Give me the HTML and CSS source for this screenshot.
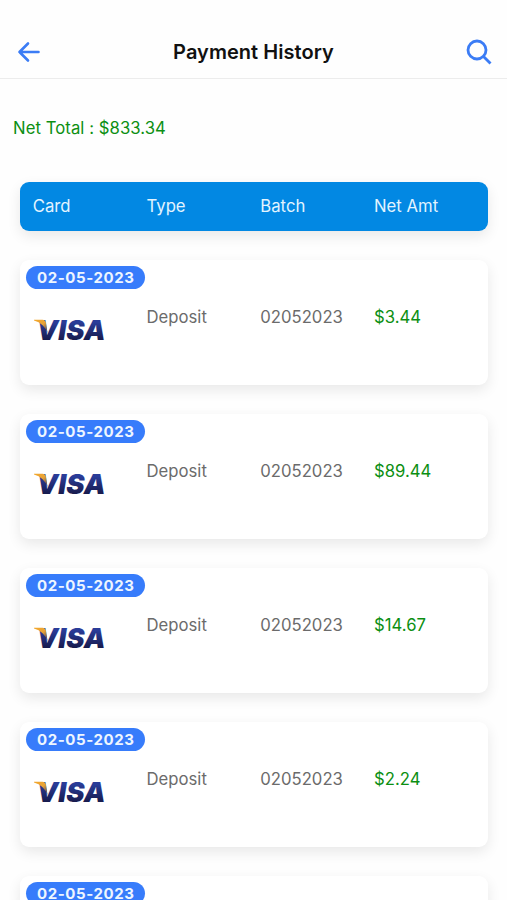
FILE: index.html
```
<!DOCTYPE html>
<html lang="en">
  <head>
    <meta charset="UTF-8" />
    <meta name="viewport" content="width=device-width, initial-scale=1.0" />
    <title>Payment History</title>
    <link rel="stylesheet" href="styles.css">
  </head>
  <body>
    <!-- shared logo, reused by every payment -->
    <svg class="defs" width="0" height="0" aria-hidden="true">
      <defs>
        <linearGradient id="visaBlue" x1="0" y1="0" x2="0" y2="1">
          <stop offset="0.25" stop-color="#2a3c98" />
          <stop offset="0.85" stop-color="#151642" />
        </linearGradient>
        <linearGradient id="visaGold" x1="0" y1="0" x2="1" y2="1">
          <stop offset="0" stop-color="#f3a72b" />
          <stop offset="0.5" stop-color="#e9a437" />
          <stop offset="1" stop-color="#2c2f68" />
        </linearGradient>
        <symbol id="visa" viewBox="0 0 74 24">
          <text class="visa-text" x="3.500" y="22.300" textLength="69" lengthAdjust="spacingAndGlyphs">VISA</text>
          <path d="M1 1.800H9.500Q12.500 2 13 5L14.500 15Q11 5.500 1 2.600Z" fill="url(#visaGold)" />
        </symbol>
      </defs>
    </svg>

    <header class="topbar">
      <button class="icon-btn" aria-label="Back">
        <svg width="24" height="24" viewBox="0 0 24 24">
          <path d="M11 3.500L2.500 12L11 20.500M2.500 12H21.500" />
        </svg>
      </button>
      <h1>Payment History</h1>
      <button class="icon-btn" aria-label="Search">
        <svg class="search" width="26" height="26" viewBox="0 0 26 26">
          <circle cx="11" cy="11" r="9" />
          <path d="M17.500 17.500L24.500 24.500" />
        </svg>
      </button>
    </header>

    <main>
      <p class="net-total">Net Total : $833.34</p>

      <div class="row table-head">
        <span>Card</span>
        <span>Type</span>
        <span>Batch</span>
        <span>Net Amt</span>
      </div>

      <section class="payment">
        <span class="date">02-05-2023</span>
        <div class="row">
          <svg class="visa" width="74" height="24"><use href="#visa" /></svg>
          <span>Deposit</span>
          <span>02052023</span>
          <span class="amount">$3.44</span>
        </div>
      </section>

      <section class="payment">
        <span class="date">02-05-2023</span>
        <div class="row">
          <svg class="visa" width="74" height="24"><use href="#visa" /></svg>
          <span>Deposit</span>
          <span>02052023</span>
          <span class="amount">$89.44</span>
        </div>
      </section>

      <section class="payment">
        <span class="date">02-05-2023</span>
        <div class="row">
          <svg class="visa" width="74" height="24"><use href="#visa" /></svg>
          <span>Deposit</span>
          <span>02052023</span>
          <span class="amount">$14.67</span>
        </div>
      </section>

      <section class="payment">
        <span class="date">02-05-2023</span>
        <div class="row">
          <svg class="visa" width="74" height="24"><use href="#visa" /></svg>
          <span>Deposit</span>
          <span>02052023</span>
          <span class="amount">$2.24</span>
        </div>
      </section>

      <section class="payment">
        <span class="date">02-05-2023</span>
      </section>
    </main>
  </body>
</html>
```
FILE: styles.css
```
* {
  box-sizing: border-box;
}
body {
  margin: 0;
  height: 900px;
  overflow: hidden;
  background: #fefefe;
  font-family: Inter, "Liberation Sans", sans-serif;
  font-size: 16.7px;
  color: #6b6b6b;
}
.defs {
  display: block;
}
.topbar {
  display: flex;
  align-items: center;
  justify-content: space-between;
  height: 79px;
  padding: 26px 15px 0 17px;
  border-bottom: 1px solid #ececec;
}
h1 {
  margin: 0;
  font-size: 20px;
  font-weight: 600;
  letter-spacing: 0.05px;
  color: #111;
}
.icon-btn {
  display: flex;
  padding: 0;
  border: none;
  background: none;
}
.icon-btn svg {
  fill: none;
  stroke: #3b7cf5;
  stroke-width: 2.6;
  stroke-linecap: round;
  stroke-linejoin: round;
}
.icon-btn .search {
  stroke-width: 2.8;
  stroke-linecap: butt;
}
.net-total {
  margin: 39px 0 42.6px 13px;
  line-height: 21px;
  letter-spacing: 0.06px;
  color: #0c8f12;
}
.row {
  display: grid;
  grid-template-columns: repeat(4, 113.75px);
  padding-left: 12.5px;
  line-height: 21px;
}
.table-head,
.payment {
  margin: 0 19.5px 29.8px 20.3px;
  border-radius: 9px;
  box-shadow: 0 5px 14px rgba(0, 0, 0, 0.09);
}
.table-head {
  height: 49px;
  padding-top: 14.5px;
  background: #0288e3;
  color: #e3f4ff;
}
.payment {
  height: 124.2px;
  padding-top: 5.6px;
  background: #fff;
}
.date {
  display: block;
  width: 119px;
  height: 23.4px;
  margin: 0 0 17.4px 6px;
  border-radius: 12px;
  background: #377cfb;
  color: #eef6ff;
  font-size: 15px;
  font-weight: 700;
  line-height: 23px;
  letter-spacing: 0.6px;
  text-align: center;
}
.visa {
  margin-top: 11px;
}
.visa-text {
  font-family: Inter, "Liberation Sans", sans-serif;
  font-size: 27px;
  font-weight: 900;
  font-style: italic;
  fill: url(#visaBlue);
}
.amount {
  color: #0c8f12;
}
```
